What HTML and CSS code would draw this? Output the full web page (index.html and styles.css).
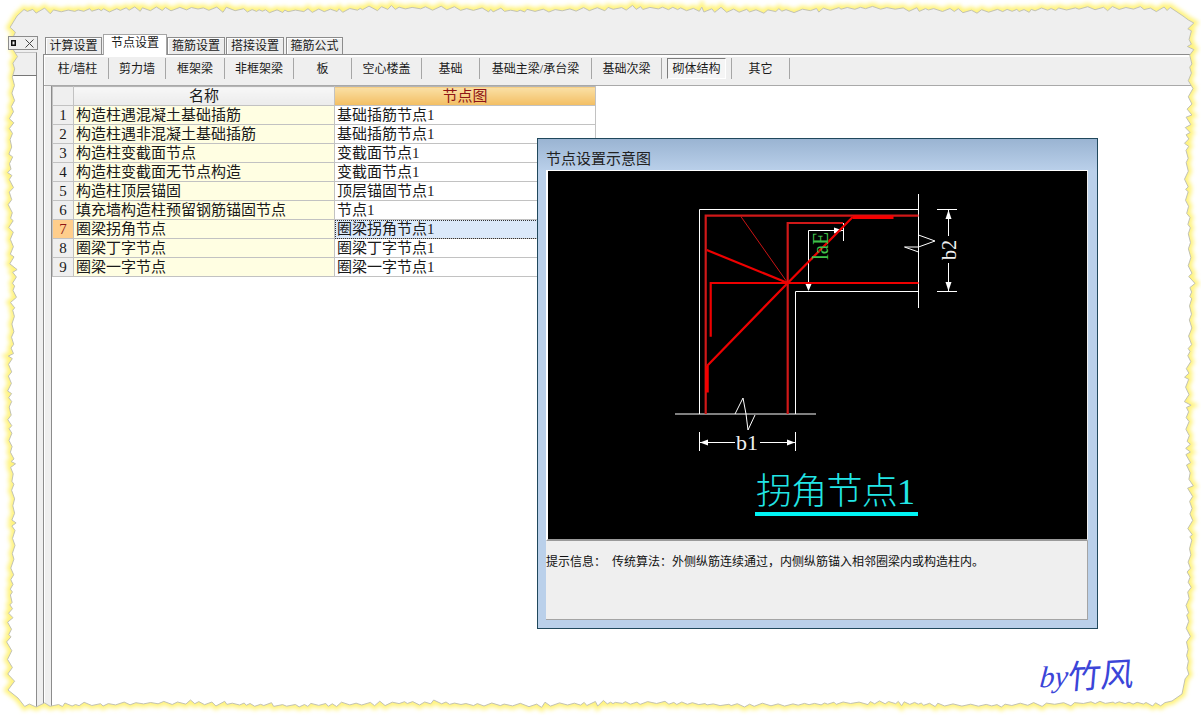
FILE: index.html
```html
<!DOCTYPE html>
<html lang="zh-CN">
<head>
<meta charset="utf-8">
<title>节点设置</title>
<link rel="stylesheet" href="styles.css">
</head>
<body>
<div class="app">
  <aside class="side">
    <div class="side-tab">
      <svg class="pin" viewBox="0 0 5 6" width="5" height="6"><path d="M0 0H5V6H0Z M1.500 1.500V4.500H3.500V1.500Z" fill="#111" fill-rule="evenodd"/></svg>
      <svg class="close" viewBox="0 0 9 9" width="9" height="9"><path d="M0.500 0.500L8.500 8.500M8.500 0.500L0.500 8.500" stroke="#444" fill="none"/></svg>
    </div>
    <div class="side-head"></div>
    <div class="side-body"></div>
  </aside>
  <div class="gutter"></div>
  <main class="main">
    <nav class="tabs">
      <div class="tab">计算设置</div>
      <div class="tab active">节点设置</div>
      <div class="tab">箍筋设置</div>
      <div class="tab">搭接设置</div>
      <div class="tab">箍筋公式</div>
    </nav>
    <div class="toolbar">
      <div class="tool">柱/墙柱</div>
      <div class="tool">剪力墙</div>
      <div class="tool">框架梁</div>
      <div class="tool">非框架梁</div>
      <div class="tool">板</div>
      <div class="tool">空心楼盖</div>
      <div class="tool">基础</div>
      <div class="tool">基础主梁/承台梁</div>
      <div class="tool">基础次梁</div>
      <div class="tool"><span class="pressed">砌体结构</span></div>
      <div class="tool">其它</div>
    </div>
    <div class="content">
      <div class="content-gutter"></div>
      <div class="sheet">
        <table class="grid">
          <thead>
            <tr><th class="idx"></th><th class="name-head">名称</th><th class="node-head">节点图</th></tr>
          </thead>
          <tbody>
            <tr><td class="idx">1</td><td class="name">构造柱遇混凝土基础插筋</td><td>基础插筋节点1</td></tr>
            <tr><td class="idx">2</td><td class="name">构造柱遇非混凝土基础插筋</td><td>基础插筋节点1</td></tr>
            <tr><td class="idx">3</td><td class="name">构造柱变截面节点</td><td>变截面节点1</td></tr>
            <tr><td class="idx">4</td><td class="name">构造柱变截面无节点构造</td><td>变截面节点1</td></tr>
            <tr><td class="idx">5</td><td class="name">构造柱顶层锚固</td><td>顶层锚固节点1</td></tr>
            <tr><td class="idx">6</td><td class="name">填充墙构造柱预留钢筋锚固节点</td><td>节点1</td></tr>
            <tr class="current"><td class="idx">7</td><td class="name">圈梁拐角节点</td><td class="focus">圈梁拐角节点1</td></tr>
            <tr><td class="idx">8</td><td class="name">圈梁丁字节点</td><td>圈梁丁字节点1</td></tr>
            <tr><td class="idx">9</td><td class="name">圈梁一字节点</td><td>圈梁一字节点1</td></tr>
          </tbody>
        </table>
      </div>
    </div>
  </main>

  <section class="dialog">
    <h2 class="dialog-title">节点设置示意图</h2>
    <div class="canvas">
      <svg class="drawing" viewBox="548 171 539 368" width="539" height="368">
        <g fill="none" stroke="#fff" stroke-width="1">
          <path d="M699.500 414V209.500H918.500"/>
          <path d="M918.500 194V308"/>
          <path d="M795.500 414V291.500H918.500"/>
          <path d="M675 414H816"/>
          <path d="M735 414L743 398L746 414L748 430L755 415"/>
          <path d="M918.500 235L935 241L918.500 247H904.500L918.500 252"/>
          <path d="M808.500 290V230.500H843"/>
          <path d="M843.500 223V241"/>
          <path d="M937 209.500H957M937 291.500H957"/>
          <path d="M948.500 210V236M948.500 263V291"/>
          <path d="M699.500 432V451M795.500 432V451"/>
          <path d="M700 442.500H735M760 442.500H795"/>
        </g>
        <g fill="#fff">
          <path d="M808.500 291L805.500 284H811.500Z"/>
          <path d="M843 230.500L834 227.500V233.500Z"/>
          <path d="M948.500 210L945.500 219H951.500Z"/>
          <path d="M948.500 291L945.500 282H951.500Z"/>
          <path d="M700 442.500L708 439.500V445.500Z"/>
          <path d="M795 442.500L787 439.500V445.500Z"/>
        </g>
        <g fill="none" stroke="#d01818" stroke-width="2.200">
          <path d="M918.500 215.700H705.700V414"/>
          <path d="M843 223H787.700V414"/>
          <path d="M710.700 336.700V283H918.500" stroke="#ee0000"/>
          <path d="M706.700 250L787.700 283" stroke="#ee0000"/>
          <path d="M707 366L787.700 283L852.700 217" stroke="#ee0000"/>
          <path d="M741 216.700L787.700 283" stroke="#c81414" stroke-width="1"/>
          <path d="M852.700 217.300H893.500" stroke="#f40000" stroke-width="3.500"/>
          <path d="M707 366V392.500" stroke="#f40000" stroke-width="3.500"/>
        </g>
        <text class="dim-green" transform="translate(828 260) rotate(-90)" textLength="28" lengthAdjust="spacingAndGlyphs">laE</text>
        <text class="dim-white" transform="translate(956 260) rotate(-90)" textLength="20" lengthAdjust="spacingAndGlyphs">b2</text>
        <text class="dim-white" x="736" y="450" textLength="22" lengthAdjust="spacingAndGlyphs">b1</text>
        <text class="node-name" x="756" y="504" textLength="159" lengthAdjust="spacing">拐角节点1</text>
        <rect x="755" y="512" width="163" height="4" fill="#00f4f4"/>
      </svg>
    </div>
    <div class="hint">提示信息：  传统算法：外侧纵筋连续通过，内侧纵筋锚入相邻圈梁内或构造柱内。</div>
  </section>

  <div class="signature"><span class="sig-by">by</span><span class="sig-name">竹风</span></div>

  <svg id="torn" class="torn" width="1201" height="715" viewBox="0 0 1201 715" aria-hidden="true">
    <defs>
      <filter id="glow" x="-5%" y="-5%" width="110%" height="110%"><feGaussianBlur stdDeviation="2"/></filter>
      <clipPath id="outside"><path id="clip-shape" clip-rule="evenodd" d=""/></clipPath>
    </defs>
    <path id="torn-mask" fill="#fff" fill-rule="evenodd" d=""/>
    <g clip-path="url(#outside)"><path id="torn-glow" fill="none" stroke="#fff37c" stroke-width="7" filter="url(#glow)" d=""/></g>
    <path id="torn-line" fill="none" stroke="#c2c2b4" stroke-width="1" d=""/>
  </svg>
</div>
<script src="script.js"></script>
</body>
</html>
```

FILE: styles.css
```css
* { box-sizing: border-box; }
html, body { margin: 0; padding: 0; background: #fff; }
body { width: 1201px; height: 715px; overflow: hidden; font-family: "Liberation Serif", "Noto Sans CJK SC", sans-serif; color: #1a1a1a; }

.app { position: relative; display: flex; width: 1201px; height: 715px; background: #efefef; overflow: hidden; }

/* left docked panel */
.side { width: 37px; flex: none; display: flex; flex-direction: column; padding-top: 36px; }
.side-tab { height: 14px; margin-left: 8px; width: 30px; border: 1px solid #8c8c8c; background: #efefef; display: flex; align-items: center; justify-content: space-between; padding: 0 3px 0 2px; position: relative; z-index: 1; }
.side-head { height: 24px; border-top: 1px solid #c4c4c4; margin-top: 2px; border-bottom: 1px solid #777; border-right: 1px solid #8c8c8c; }
.side-body { flex: 1; background: #fff; border-right: 1px solid #8c8c8c; }
.gutter { width: 7px; flex: none; margin-top: 54px; border-right: 1px solid #8c8c8c; }

/* main column */
.main { flex: 1; display: flex; flex-direction: column; padding-top: 34px; min-width: 0; }
.tabs { display: flex; align-items: flex-end; height: 20px; padding-left: 1px; position: relative; z-index: 1; }
.tab { height: 17px; width: 57px; border: 1px solid #8c8c8c; border-bottom: 0; font-size: 12px; line-height: 17px; text-align: center; background: #ececec; box-shadow: inset 1px 1px 0 #fff; }
.tab.active { height: 21px; width: 64px; margin-bottom: -1px; background: #fff; line-height: 16px; box-shadow: none; border-color: #a6a6a6; }
.tab:nth-child(1) { margin-right: 1px; }
.tab:nth-child(3) { width: 58px; margin-right: 1px; }
.tab:nth-child(4) { width: 58px; margin-right: 2px; }

.toolbar { height: 32px; border-top: 1px solid #8c8c8c; border-bottom: 1px solid #a9a9a9; box-shadow: inset 1px 2px 0 #fff; padding: 3px 0 0 3px; display: grid; grid-template-columns: 62px 57px 59px 69px 58px 70px 58px 112px 70px 70px 58px; grid-template-rows: 21px; justify-content: start; font-size: 12px; }
.tool { border-right: 1px solid #a6a6a6; display: flex; align-items: center; justify-content: center; padding-bottom: 2px; }
.pressed { display: block; width: 59px; height: 21px; margin-bottom: -2px; line-height: 20px; text-align: center; border: 1px solid #7d7d7d; border-right-color: #fff; border-bottom-color: #fff; background: #f5f5f5; }

.content { flex: 1; display: flex; min-height: 0; }
.content-gutter { width: 8px; flex: none; border-right: 1px solid #8c8c8c; box-shadow: inset 1px 0 0 #fff; }
.sheet { flex: 1; background: #fff; }

/* grid */
.grid { border-collapse: collapse; table-layout: fixed; width: 544px; font-size: 15px; }
.grid th, .grid td { border: 1px solid #c2c2c2; padding: 0 0 0 2px; height: 19px; line-height: 17px; font-weight: 400; text-align: left; white-space: nowrap; overflow: hidden; }
.grid thead th { height: 19px; border-top: 1px solid #b5b5b5; text-align: center; padding: 0; }
.grid th.idx { width: 21px; background: #efefef; }
.grid td.idx { background: #efefef; text-align: center; padding: 0; }
.name-head { width: 261px; background: linear-gradient(#f7f7f7, #ebebeb); }
.node-head { background: linear-gradient(#fae0a6, #f3be62); color: #8e1515; }
.name { background: #fffee2; }
.current td.idx { background: #ffce8c; color: #8e1515; }
.focus { background: #dbe9fa; outline: 1px dotted #333; outline-offset: -1px; }

/* dialog */
.dialog { position: absolute; left: 537px; top: 138px; width: 561px; height: 491px; border: 1px solid #20485c; background: linear-gradient(#9ab4d2, #bad0ea 32px); padding: 0 9px 8px 8px; display: flex; flex-direction: column; }
.dialog-title { margin: 0; height: 31px; padding-top: 11px; font-size: 15px; line-height: 18px; font-weight: 400; color: #222; white-space: nowrap; }
.canvas { height: 371px; background: #000; border: 2px solid #fff; border-width: 1px 0 2px 2px; border-bottom-color: #9a9a9a; border-right: 1px solid #efefef; line-height: 0; }
.drawing { display: block; }
.hint { flex: 1; background: #efefef; border-bottom: 1px solid #a4a4a4; border-right: 1px solid #a4a4a4; padding-top: 13px; font-size: 12px; line-height: 16px; white-space: pre; color: #111; }

.dim-green { font-family: "Liberation Serif", serif; font-size: 23px; fill: #3fc04a; }
.dim-white { font-family: "Liberation Serif", serif; font-size: 22px; fill: #f0f0f0; }
.node-name { font-family: "Liberation Serif", "Noto Sans CJK SC", sans-serif; font-size: 36px; font-weight: 300; fill: #22e6e6; }

.signature { position: absolute; left: 1040px; top: 655px; display: flex; align-items: flex-end; color: #3b45d8; transform: rotate(-3deg) skewX(-8deg); white-space: nowrap; }
.sig-by { font-family: "Liberation Serif", serif; font-style: italic; font-size: 30px; line-height: 36px; }
.sig-name { font-family: "Noto Sans CJK SC", sans-serif; font-size: 33px; line-height: 38px; font-weight: 400; }

.torn { position: absolute; left: 0; top: 0; pointer-events: none; }
```

FILE: script.js
```js
(function () {
  var seed = 20417;
  function rnd() {
    seed = (seed * 16807) % 2147483647;
    return seed / 2147483647;
  }
  function edge(fromT, toT, base, amp) {
    var pts = [];
    var t = fromT;
    var dir = toT > fromT ? 1 : -1;
    var up = false;
    while ((toT - t) * dir > 0) {
      var wave = Math.sin(t / 37) * amp * 0.35;
      var spike = (up ? 1 : -1) * amp * (0.15 + 0.75 * rnd() * rnd());
      pts.push([t, base + wave + spike]);
      up = !up;
      t += dir * (2 + rnd() * 7);
    }
    return pts;
  }
  var points = [];
  edge(24, 1176, 9.500, 4).forEach(function (p) { points.push(p); });
  points.push([1183, 16]);
  edge(20, 684, 1189, 5).forEach(function (p) { points.push([p[1], p[0]]); });
  points.push([1182, 694], [1172, 701]);
  edge(1165, 24, 704, 3.500).forEach(function (p) { points.push(p); });
  points.push([18, 698]);
  edge(690, 24, 12, 5).forEach(function (p) { points.push([p[1], p[0]]); });
  points.push([17, 16]);

  var line = "M" + points.map(function (p) {
    return p[0].toFixed(1) + " " + p[1].toFixed(1);
  }).join("L") + "Z";
  var frame = "M0 0H1201V715H0Z";

  document.getElementById("torn-mask").setAttribute("d", frame + line);
  document.getElementById("clip-shape").setAttribute("d", frame + line);
  document.getElementById("torn-glow").setAttribute("d", line);
  document.getElementById("torn-line").setAttribute("d", line);
})();
```
